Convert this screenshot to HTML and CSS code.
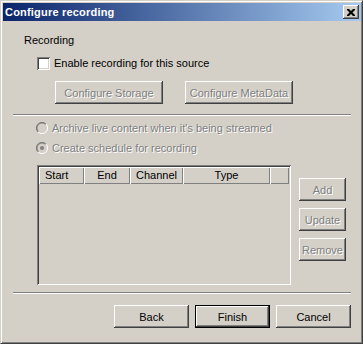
FILE: index.html
```html
<!DOCTYPE html>
<html>
<head>
    <meta charset="utf-8" />
    <title>Configure recording</title>
    <link rel="stylesheet" href="styles.css">
</head>
<body>
    <div class="window">
        <div class="titlebar">
            <span class="title">Configure recording</span>
            <span class="close">
                <svg width="8" height="7" viewBox="0 0 8 7">
                    <path d="M0 0h2l2 2 2-2h2v1l-2.5 2.5L8 6v1H6L4 5 2 7H0V6l2.5-2.5L0 1z" fill="#000"/>
                </svg>
            </span>
        </div>
        <div class="dialog">
            <div class="group-label">Recording</div>
            <label class="check">
                <span class="checkbox"></span>
                Enable recording for this source
            </label>
            <div class="config-buttons">
                <button class="btn wide" disabled>Configure Storage</button>
                <button class="btn wide" disabled>Configure MetaData</button>
            </div>
            <div class="sep"></div>
            <div class="radio disabled">
                <svg width="12" height="12" viewBox="0 0 12 12">
                    <path d="M10 2A5.5 5.5 0 0 0 2 10" stroke="#808080" fill="none"/>
                    <path d="M9.5 2.5A4.6 4.6 0 0 0 2.5 9.5" stroke="#404040" fill="none" opacity="0.5"/>
                    <path d="M2 10A5.5 5.5 0 0 0 10 2" stroke="#fff" fill="none"/>
                </svg>
                Archive live content when it's being streamed
            </div>
            <div class="radio disabled">
                <svg width="12" height="12" viewBox="0 0 12 12">
                    <path d="M10 2A5.5 5.5 0 0 0 2 10" stroke="#808080" fill="none"/>
                    <path d="M9.5 2.5A4.6 4.6 0 0 0 2.5 9.5" stroke="#404040" fill="none" opacity="0.5"/>
                    <path d="M2 10A5.5 5.5 0 0 0 10 2" stroke="#fff" fill="none"/>
                    <circle cx="6" cy="6" r="2" fill="#808080"/>
                </svg>
                Create schedule for recording
            </div>
            <div class="schedule">
                <div class="listview">
                    <div class="lv-header">
                        <span class="col col-start">Start</span>
                        <span class="col col-end">End</span>
                        <span class="col col-channel">Channel</span>
                        <span class="col col-type">Type</span>
                        <span class="col col-rest"></span>
                    </div>
                </div>
                <div class="side-buttons">
                    <button class="btn small" disabled>Add</button>
                    <button class="btn small" disabled>Update</button>
                    <button class="btn small" disabled>Remove</button>
                </div>
            </div>
            <div class="sep bottom"></div>
            <div class="footer">
                <button class="btn">Back</button>
                <button class="btn default">Finish</button>
                <button class="btn">Cancel</button>
            </div>
        </div>
    </div>
</body>
</html>
```
FILE: styles.css
```css
html, body {
    margin: 0;
    padding: 0;
    background: #d4d0c8;
    font-family: "Liberation Sans", Arial, sans-serif;
    font-size: 11px;
    color: #000;
}
.window {
    box-sizing: border-box;
    width: 363px;
    height: 344px;
    padding: 1px;
    background: #d4d0c8;
    border: 1px solid;
    border-color: #d4d0c8 #404040 #404040 #d4d0c8;
    box-shadow: inset 1px 1px #fff, inset -1px -1px #808080;
}
.titlebar {
    height: 18px;
    margin: 1px 0 0 1px;
    display: flex;
    align-items: center;
    justify-content: space-between;
    background: linear-gradient(to right, #0a246a 0%, #a6caf0 100%);
}
.title {
    color: #fff;
    font-weight: bold;
    font-size: 11px;
    padding-left: 2px;
    letter-spacing: 0.2px;
}
.close {
    box-sizing: border-box;
    width: 16px;
    height: 14px;
    margin-right: 2px;
    display: flex;
    align-items: center;
    justify-content: center;
    background: #d4d0c8;
    box-shadow: inset -1px -1px #404040, inset 1px 1px #fff, inset -2px -2px #808080;
}
.dialog {
    padding: 0 10px 0 11px;
}
.group-label {
    margin: 13px 0 0 11px;
    line-height: 13px;
}
.check {
    display: flex;
    align-items: center;
    margin: 10px 0 0 24px;
    line-height: 13px;
}
.checkbox {
    box-sizing: border-box;
    width: 13px;
    height: 13px;
    margin-right: 4px;
    background: #fff;
    box-shadow: inset 1px 1px #808080, inset -1px -1px #fff, inset 2px 2px #404040, inset -2px -2px #d4d0c8;
}
.config-buttons {
    display: flex;
    gap: 22px;
    margin: 11px 0 0 42px;
}
.btn {
    box-sizing: border-box;
    height: 23px;
    padding: 0;
    border: none;
    background: #d4d0c8;
    font-family: inherit;
    font-size: 11px;
    color: #000;
    box-shadow: inset -1px -1px #404040, inset 1px 1px #fff, inset -2px -2px #808080;
}
.btn:disabled {
    color: #808080;
    text-shadow: 1px 1px #fff;
}
.btn.wide {
    width: 108px;
}
.btn.small {
    width: 47px;
}
.btn.default {
    box-shadow: inset 0 0 0 1px #000, inset -2px -2px #404040, inset 2px 2px #fff, inset -3px -3px #808080;
}
.sep {
    height: 1px;
    margin-top: 10px;
    border-top: 1px solid #808080;
    border-bottom: 1px solid #fff;
    height: 0;
}
.sep.bottom {
    margin-top: 7px;
}
.radio {
    display: flex;
    align-items: center;
    margin-left: 23px;
    height: 12px;
    line-height: 12px;
    margin-top: 6px;
}
.radio + .radio {
    margin-top: 8px;
}
.radio svg {
    margin-right: 4px;
}
.disabled {
    color: #808080;
    text-shadow: 1px 1px #fff;
}
.schedule {
    display: flex;
    align-items: flex-start;
    gap: 8px;
    margin: 11px 0 0 24px;
}
.listview {
    box-sizing: border-box;
    width: 254px;
    height: 120px;
    padding: 2px;
    background: #d4d0c8;
    box-shadow: inset 1px 1px #808080, inset -1px -1px #fff, inset 2px 2px #404040, inset -2px -2px #d4d0c8;
}
.lv-header {
    display: flex;
    height: 17px;
}
.col {
    box-sizing: border-box;
    height: 17px;
    line-height: 16px;
    text-align: center;
    box-shadow: inset 1px 1px #fff, inset -1px -1px #808080;
}
.col-start { width: 45px; text-align: left; padding-left: 6px; }
.col-end { width: 46px; }
.col-channel { width: 53px; }
.col-type { width: 87px; }
.col-rest { flex: 1; }
.side-buttons {
    display: flex;
    flex-direction: column;
    gap: 7px;
    margin-top: 13px;
}
.footer {
    display: flex;
    justify-content: flex-end;
    gap: 6px;
    margin-top: 11px;
}
.footer .btn {
    width: 75px;
}
```
